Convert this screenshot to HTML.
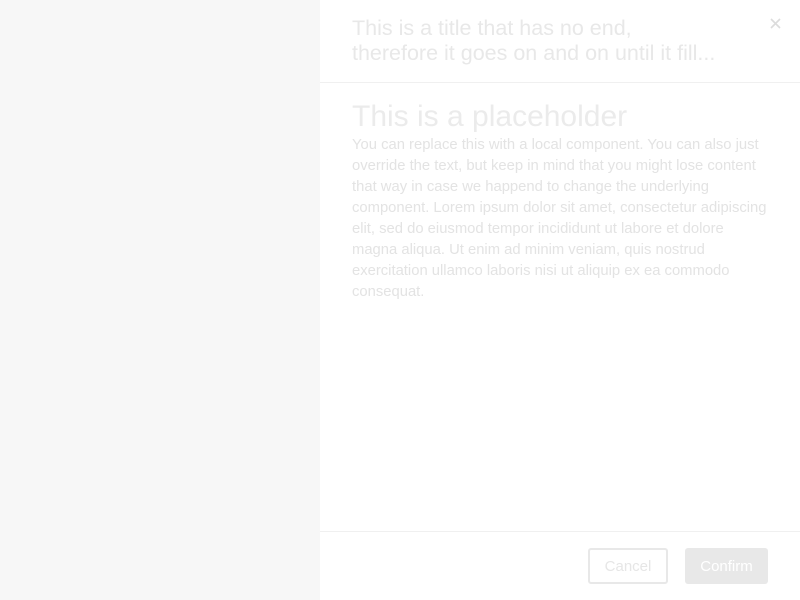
<!DOCTYPE html>
<html><head><style>
body{margin:0;width:800px;height:600px;background:#f7f7f7;font-family:"Liberation Sans",sans-serif;overflow:hidden;position:relative}
.panel{position:absolute;left:320px;top:0;width:480px;height:600px;background:#fff}
.title{position:absolute;left:32px;top:16px;font-size:21.5px;line-height:25px;color:#e8e8e8;white-space:nowrap}
.hr1{position:absolute;left:0;top:82px;width:480px;height:1px;background:#f0f0f0}
.h{position:absolute;left:32px;top:97px;font-size:30px;line-height:40px;color:#ebebeb}
.p{position:absolute;left:32px;top:135px;width:418px;font-size:14.8px;line-height:21px;color:#e3e3e3}
.hr2{position:absolute;left:0;top:531px;width:480px;height:1px;background:#f0f0f0}
.b1{position:absolute;left:268px;top:548px;width:76px;height:32px;border:2px solid #e8e8e8;border-radius:3px;color:#e6e6e6;font-size:15px;line-height:34px;text-align:center}
.b2{position:absolute;left:365px;top:548px;width:83px;height:36px;background:#e8e8e8;border-radius:3px;color:#fff;font-size:15px;line-height:38px;text-align:center}
</style></head><body>
<div class="panel">
<div class="title">This is a title that has no end,<br>therefore it goes on and on until it fill...</div>
<div class="hr1"></div>
<div class="h">This is a placeholder</div>
<div class="p">You can replace this with a local component. You can also just override the text, but keep in mind that you might lose content that way in case we happend to change the underlying component. Lorem ipsum dolor sit amet, consectetur adipiscing elit, sed do eiusmod tempor incididunt ut labore et dolore magna aliqua. Ut enim ad minim veniam, quis nostrud exercitation ullamco laboris nisi ut aliquip ex ea commodo consequat.</div>
<div class="hr2"></div>
<div class="b1">Cancel</div>
<div class="b2">Confirm</div>
</div>
<svg style="position:absolute;left:770px;top:18px" width="11" height="11"><path d="M1 1L10 10M10 1L1 10" stroke="#dcdcdc" stroke-width="1.6"/></svg>
</body></html>
